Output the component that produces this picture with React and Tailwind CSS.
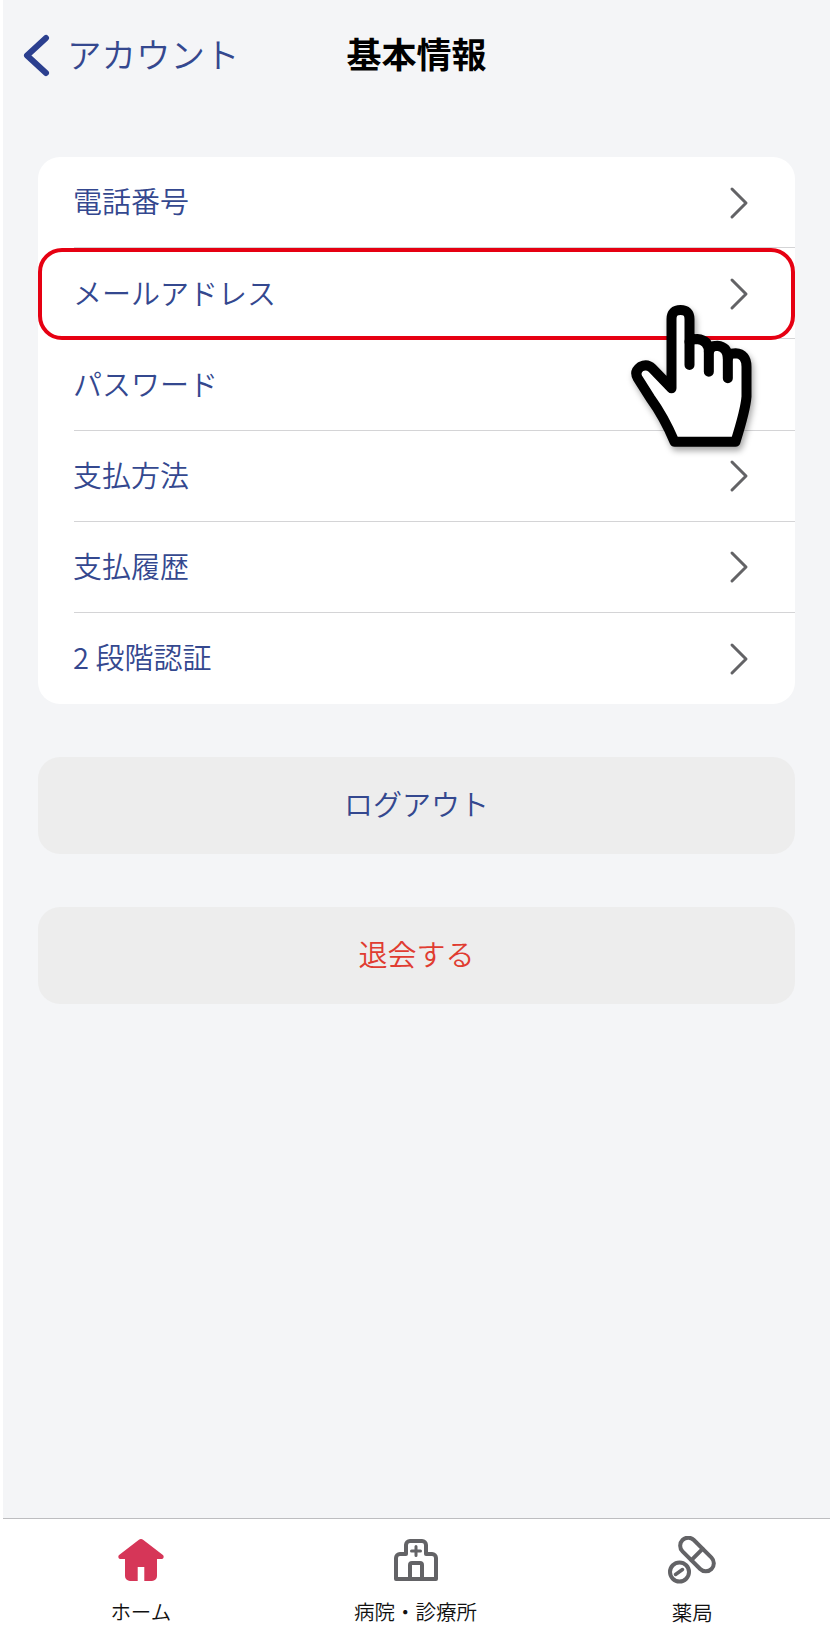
import React from 'react';

const rows = ['電話番号', 'メールアドレス', 'パスワード', '支払方法', '支払履歴', '2 段階認証'];

const font = { fontFamily: '"Noto Sans CJK JP", sans-serif' };

function Chevron() {
  return (
    <svg width="20" height="34" viewBox="0 0 20 34" fill="none" stroke="#636366" strokeWidth="3" strokeLinecap="round" strokeLinejoin="round">
      <path d="M3 3l14 14L3 31" />
    </svg>
  );
}

function Hand() {
  return (
    <svg
      className="absolute z-20 left-[627px] top-[300px] w-[127px] h-[150px] drop-shadow-[2px_4px_3px_rgba(0,0,0,0.35)]"
      viewBox="80 210 380 450"
      fill="#fff"
      stroke="#000"
      strokeWidth="30"
      strokeLinecap="round"
      strokeLinejoin="round"
    >
      <path d="M213 475V267Q213 240 240 240Q267 240 267 267V335Q270 327 290 327Q325 330 325 365Q330 347 350 347Q382 350 382 385Q385 370 405 370Q438 372 438 410V500Q435 540 405 635H222Q190 560 150 505L112 445Q100 425 120 410Q140 400 155 415Z" />
      <path d="M267 335V405M325 365V425M382 385V445" fill="none" />
    </svg>
  );
}

export default function App() {
  return (
    <div className="relative w-[833px] h-[1639px] bg-white px-[3px] flex flex-col overflow-hidden" style={font}>
      <div className="flex-1 bg-[#f4f5f7] flex flex-col">
        {/* Header */}
        <div className="h-[157px] pt-[33px] pl-[20px] pr-[20px] grid grid-cols-[1fr_auto_1fr] items-start">
          <div className="flex items-center gap-[17px] h-[41px] text-[#34488f]">
            <svg className="mt-[4px]" width="27" height="43" viewBox="0 0 27 43" fill="none" stroke="#2b3f8f" strokeWidth="6" strokeLinecap="round" strokeLinejoin="round">
              <path d="M23 4L4 21.500 23 39" />
            </svg>
            <span className="text-[34.5px] whitespace-nowrap [font-weight:350]">アカウント</span>
          </div>
          <div className="h-[41px] flex items-center text-[35px] font-bold text-black">基本情報</div>
          <div />
        </div>

        {/* List */}
        <div className="mx-[35px] rounded-[22px] bg-white">
          {rows.map((row, i) => (
            <div key={row} className="relative h-[91.2px] pl-[35px] flex items-center">
              {i > 0 && <div className="absolute left-[36px] right-0 top-[-1px] h-px bg-[#d4d4d6]" />}
              <span className="flex-1 -mt-[3px] text-[29px] [font-weight:350] text-[#34488f]">{row}</span>
              <div className="mr-[46px] flex items-center"><Chevron /></div>
              {i === 1 && <div className="absolute z-10 inset-x-0 top-0 -bottom-px rounded-[24px] border-4 border-[#e60012]" />}
            </div>
          ))}
        </div>

        {/* Buttons */}
        <div className="mx-[35px] mt-[53px] h-[97px] pb-[3px] rounded-[22px] bg-[#ededed] flex items-center justify-center text-[29px] [font-weight:350] text-[#34488f]">ログアウト</div>
        <div className="mx-[35px] mt-[53px] h-[97px] pb-[3px] rounded-[22px] bg-[#ededed] flex items-center justify-center text-[29px] [font-weight:350] text-[#e03c31]">退会する</div>
      </div>

      {/* Bottom nav */}
      <div className="h-[121px] border-t border-[#bdbdc0] grid grid-cols-3 bg-white">
        <div className="flex flex-col items-center pt-[20px]">
          <svg width="46" height="42" viewBox="0 0 46 42" fill="#d63658">
            <path d="M20.600 1a4 4 0 0 1 4.800 0l19.500 15c1.400 1.100.8 4-1 4H39v17a5 5 0 0 1-5 5h-7.700V28h-6.600v14H12a5 5 0 0 1-5-5V20H2.100c-1.800 0-2.400-2.900-1-4z" />
          </svg>
          <span className="mt-[15px] text-[20.5px] leading-[30px] [font-weight:350] text-[#111]">ホーム</span>
        </div>
        <div className="flex flex-col items-center pt-[20px]">
          <svg width="44" height="42" viewBox="0 0 44 42" fill="none" stroke="#636366" strokeWidth="4" strokeLinejoin="round" strokeLinecap="round">
            <path d="M12 15V6a4 4 0 0 1 4-4h12a4 4 0 0 1 4 4v9h6a4 4 0 0 1 4 4v21H2V19a4 4 0 0 1 4-4z" />
            <path d="M16 40V26a2 2 0 0 1 2-2h8a2 2 0 0 1 2 2v14" />
            <path d="M22 7.500v9M17.500 12h9" strokeWidth="3" />
          </svg>
          <span className="mt-[15px] mr-[2px] text-[20.5px] leading-[30px] [font-weight:350] text-[#111]">病院・診療所</span>
        </div>
        <div className="flex flex-col items-center pt-[17px]">
          <svg width="48" height="48" viewBox="0 0 48 48" fill="none" stroke="#636366" strokeWidth="4" strokeLinecap="round" strokeLinejoin="round">
            <rect x="8.500" y="10.500" width="41" height="16" rx="8" transform="rotate(45 29 18.500)" />
            <path d="M34.600 12.900L23.400 24.100" />
            <circle cx="11.500" cy="36" r="9.500" />
            <path d="M7.500 38.500l7-5" strokeWidth="3.500" />
          </svg>
          <span className="mt-[13px] text-[20.5px] leading-[30px] [font-weight:350] text-[#111]">薬局</span>
        </div>
      </div>

      <Hand />
    </div>
  );
}
